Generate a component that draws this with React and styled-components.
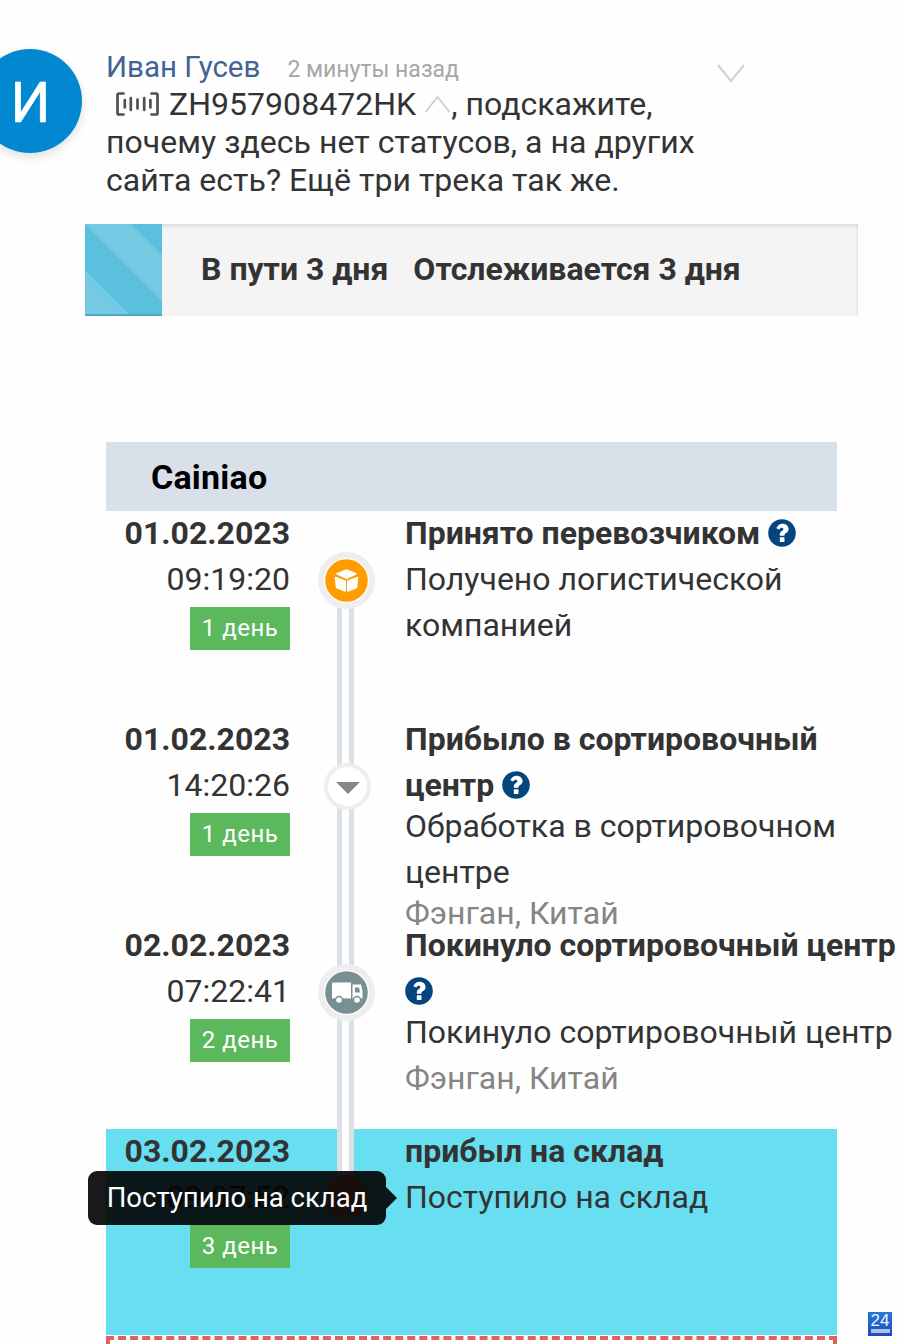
import React from "react";
import styled, { createGlobalStyle } from "styled-components";

const Global = createGlobalStyle`
  * { box-sizing: border-box; }
  body { margin: 0; background: #fefefe; font-family: Roboto, "Liberation Sans", sans-serif; color: #333; }
`;

const Page = styled.main`
  position: relative;
  width: 900px;
  height: 1344px;
  overflow: hidden;
`;

const Comment = styled.article`
  display: flex;
  align-items: flex-start;
  height: 224px;
  padding-top: 48px;
`;

const Avatar = styled.div`
  flex: none;
  display: flex;
  align-items: center;
  justify-content: center;
  width: 104px;
  height: 104px;
  margin: 1px 24px 0 -22px;
  padding: 3px 0 0 1px;
  border-radius: 50%;
  background: #0288d1;
  color: #fff;
  font-size: 56px;
  line-height: 1;
  -webkit-text-stroke: 0.6px #fff;
  box-shadow: 0 4px 10px rgba(0, 0, 0, 0.12);
`;

const CommentBody = styled.div`
  width: 596px;
`;

const Meta = styled.header`
  display: flex;
  align-items: baseline;
  gap: 27px;
  height: 37px;
  line-height: 38px;
  white-space: nowrap;
`;

const Author = styled.span`
  color: #426298;
  font-size: 29.5px;
`;

const Ago = styled.span`
  color: #a6a6a6;
  font-size: 23px;
`;

const Message = styled.p`
  margin: 0;
  font-size: 32px;
  line-height: 38px;
  letter-spacing: 0.035px;
  color: #333;
  white-space: nowrap;
`;

const Line = styled.span`
  display: block;
  height: 38px;
  padding-left: ${(p) => p.$indent || 0}px;
`;

const BarcodeSvg = styled.svg`
  margin-right: 2px;
  vertical-align: -1px;
`;

const CaretSvg = styled.svg`
  margin-left: 0;
`;

const Collapse = styled.div`
  margin: 16px 0 0 15px;
  line-height: 0;
`;

const Progress = styled.section`
  display: flex;
  width: 773px;
  height: 92px;
  margin-left: 85px;
  background: #f4f4f4;
  box-shadow: inset 0 3px 3px rgba(0, 0, 0, 0.07), inset -1px 0 2px rgba(0, 0, 0, 0.06);
`;

const Stripes = styled.div`
  width: 77px;
  height: 92px;
  line-height: 0;
`;

const ProgressText = styled.div`
  display: flex;
  gap: 25px;
  padding-left: 39px;
  font-size: 32px;
  font-weight: 700;
  line-height: 90px;
  white-space: nowrap;
`;

const Tracking = styled.section`
  width: 731px;
  margin: 126px 0 0 106px;
`;

const Carrier = styled.h2`
  height: 69px;
  margin: 0;
  padding-left: 45px;
  background: #dae0e9;
  color: #000;
  font-size: 34px;
  font-weight: 700;
  line-height: 71px;
  letter-spacing: 0.2px;
`;

const Row = styled.div`
  display: grid;
  grid-template-columns: 184px 115px 1fr;
  height: 206px;
  background: ${(p) => (p.$active ? "#68dff0" : "transparent")};
  font-size: 32px;
  line-height: 46px;
  white-space: nowrap;
`;

const When = styled.div`
  display: flex;
  flex-direction: column;
  align-items: flex-end;
  margin-top: -1px;
`;

const DateText = styled.strong`
  display: block;
  height: 46px;
`;

const TimeText = styled.span`
  display: block;
  height: 46px;
`;

const Badge = styled.span`
  width: 100px;
  height: 43px;
  margin-top: 4.6px;
  background: #5cb85c;
  color: #fff;
  font-size: 24px;
  letter-spacing: 0.5px;
  line-height: 43px;
  text-align: center;
`;

const Rail = styled.div`
  display: flex;
  justify-content: center;
  width: 17px;
  height: ${(p) => p.$h}px;
  margin-left: 47px;
  background: linear-gradient(90deg, #dbe0e4 5px, #fefefe 5px 12px, #dbe0e4 12px) 0 ${(p) => p.$from || 0}px no-repeat;
`;

const Node = styled.div`
  flex: none;
  display: flex;
  align-items: center;
  justify-content: center;
  width: ${(p) => p.$size}px;
  height: ${(p) => p.$size}px;
  margin-top: ${(p) => p.$top}px;
  transform: translateX(${(p) => p.$dx || 0}px);
  border: ${(p) => p.$ring}px solid ${(p) => p.$fill || "#eeeeee"};
  border-radius: 50%;
  background: ${(p) => p.$fill || "#fff"};
`;

const Details = styled.div`
  margin-top: -1px;
`;

const Title = styled.strong`
  display: block;
`;

const Text = styled.div`
  margin-top: ${(p) => p.$mt || 0}px;
  color: ${(p) => (p.$muted ? "#858585" : "#333")};
`;

const HelpSvg = styled.svg`
  display: inline-block;
  margin-left: ${(p) => p.$ml}px;
  vertical-align: -3px;
`;

const NextBox = styled.div`
  height: 30px;
  margin-top: 1px;
  border: 4px dashed #e06060;
`;

const Tooltip = styled.div`
  position: absolute;
  left: 88px;
  top: 1171px;
  width: 298px;
  height: 54px;
  border-radius: 9px;
  background: rgba(0, 0, 0, 0.9);
  color: #fff;
  font-size: 27.5px;
  line-height: 54px;
  text-align: center;
  white-space: nowrap;
  &::after {
    content: "";
    position: absolute;
    left: 298px;
    top: 16px;
    border: 11px solid transparent;
    border-left-color: rgba(0, 0, 0, 0.9);
    border-right-width: 0;
  }
`;

const Stamp = styled.div`
  position: absolute;
  left: 868px;
  top: 1312px;
  width: 24px;
  height: 24px;
  background: linear-gradient(#2878d4, #1c4cba);
  color: #eef5ff;
  font: 17px/18px "Liberation Sans", sans-serif;
  text-align: center;
  &::after {
    content: "";
    display: block;
    width: 19px;
    height: 4px;
    margin: -1px auto 0;
    background: #a9c0ea;
  }
`;

const Help = ({ ml = 0 }) => (
  <HelpSvg $ml={ml} width="28" height="28" viewBox="0 0 28 28">
    <circle cx="14" cy="14" r="13.8" fill="#05457d" />
    <path d="M8.300 9.200C9.800 6.200 12 4.800 14.600 4.800c3.300 0 6 2.200 6 5.300 0 3.900-4.100 4.200-4.100 6v.7h-4.700v-1.100c0-3.500 3.600-3.700 3.600-5.400 0-.9-.7-1.500-1.600-1.500-1.100 0-1.800.6-2.500 1.600Z" fill="#fff" />
    <rect x="11.800" y="18.200" width="4.700" height="4.700" rx=".6" fill="#fff" />
  </HelpSvg>
);

const Barcode = () => (
  <BarcodeSvg width="43" height="24" viewBox="0 0 43 24" fill="none" stroke="#505050" strokeWidth="2.700" strokeLinecap="round">
    <path d="M7.500 1.500H3Q1.500 1.500 1.500 3V21Q1.500 22.500 3 22.500H7.500M35.500 1.500H40Q41.500 1.500 41.500 3V21Q41.500 22.500 40 22.500H35.500" />
    <path d="M8.800 8V15.500M14.800 6V18M21.500 7.500V16.500M28.200 6V18M34.400 8V15.500" />
  </BarcodeSvg>
);

const Box = () => (
  <svg width="43" height="43" viewBox="0 0 43 43">
    <circle cx="21.500" cy="21.500" r="21.300" fill="#ff9c00" />
    <path d="M21.500 11 31 14.800 21.500 19.200 12 14.800ZM10.500 18.500 20.300 22.300V32L11.500 28.500ZM32.500 18.500 22.700 22.300V32L31.500 28.500Z" fill="#fff" stroke="#fff" strokeWidth="1.500" strokeLinejoin="round" />
  </svg>
);

const Truck = () => (
  <svg width="43" height="43" viewBox="0 0 43 43">
    <circle cx="21.500" cy="21.500" r="21.300" fill="#7a8f91" />
    <path d="M7 11.500H26V27.500H7ZM27.500 13.500H36L37.500 20V27.500H27.500Z" fill="#fff" />
    <path d="M30 16.500H34L35 21.500H30Z" fill="#7a8f91" />
    <circle cx="14" cy="29" r="4.300" fill="#7a8f91" />
    <circle cx="32" cy="29" r="4.300" fill="#7a8f91" />
    <circle cx="14" cy="29" r="2.800" fill="#fff" />
    <circle cx="32" cy="29" r="2.800" fill="#fff" />
  </svg>
);

export default function App() {
  return (
    <Page>
      <Global />
      <Comment>
        <Avatar>И</Avatar>
        <CommentBody>
          <Meta>
            <Author>Иван Гусев</Author>
            <Ago>2 минуты назад</Ago>
          </Meta>
          <Message>
            <Line $indent={10}>
              <Barcode /> ZH957908472HK{" "}
              <CaretSvg width="27" height="20" viewBox="0 0 27 20" fill="none" stroke="#d0d0d0" strokeWidth="2">
                <path d="M1.500 17 13.500 2 25.500 17" />
              </CaretSvg>
              , подскажите,
            </Line>
            <Line>почему здесь нет статусов, а на других</Line>
            <Line>сайта есть? Ещё три трека так же.</Line>
          </Message>
        </CommentBody>
        <Collapse>
          <svg width="28" height="20" viewBox="0 0 28 20" fill="none" stroke="#d3d3d3" strokeWidth="2.200">
            <path d="M1 1 14 17 27 1" />
          </svg>
        </Collapse>
      </Comment>
      <Progress>
        <Stripes>
          <svg width="77" height="92" viewBox="0 0 77 92">
            <path d="M0 0H77V92H0Z" fill="#5bc0de" />
            <path d="M0 0H46L77 31V77ZM0 46 46 92H0Z" fill="#74c9e3" />
            <path d="M0 90H77V92H0Z" fill="#4fa8c4" />
          </svg>
        </Stripes>
        <ProgressText>
          <span>В пути 3 дня</span>
          <span>Отслеживается 3 дня</span>
        </ProgressText>
      </Progress>
      <Tracking>
        <Carrier>Cainiao</Carrier>
        <Row>
          <When>
            <DateText>01.02.2023</DateText>
            <TimeText>09:19:20</TimeText>
            <Badge>1 день</Badge>
          </When>
          <Rail $h={206} $from={70}>
            <Node $size={57} $ring={6} $top={41} $dx={1}><Box /></Node>
          </Rail>
          <Details>
            <Title>Принято перевозчиком<Help ml={8} /></Title>
            <Text>Получено логистической<br />компанией</Text>
          </Details>
        </Row>
        <Row>
          <When>
            <DateText>01.02.2023</DateText>
            <TimeText>14:20:26</TimeText>
            <Badge>1 день</Badge>
          </When>
          <Rail $h={206}>
            <Node $size={47} $ring={4} $top={46} $dx={2}>
              <svg width="26" height="14" viewBox="0 0 26 14"><path d="M1 2H25L13 14Z" fill="#888883" /></svg>
            </Node>
          </Rail>
          <Details>
            <Title>Прибыло в сортировочный<br />центр<Help ml={8} /></Title>
            <Text $mt={-5}>Обработка в сортировочном<br />центре</Text>
            <Text $mt={-5} $muted>Фэнган, Китай</Text>
          </Details>
        </Row>
        <Row>
          <When>
            <DateText>02.02.2023</DateText>
            <TimeText>07:22:41</TimeText>
            <Badge>2 день</Badge>
          </When>
          <Rail $h={206}>
            <Node $size={57} $ring={6} $top={41} $dx={1}><Truck /></Node>
          </Rail>
          <Details>
            <Title>Покинуло сортировочный центр<br /><Help /></Title>
            <Text $mt={-5}>Покинуло сортировочный центр</Text>
            <Text $muted>Фэнган, Китай</Text>
          </Details>
        </Row>
        <Row $active>
          <When>
            <DateText>03.02.2023</DateText>
            <TimeText>09:07:52</TimeText>
            <Badge>3 день</Badge>
          </When>
          <Rail $h={46}>
            <Node $size={44} $ring={4} $top={46} $fill="#f08a78" />
          </Rail>
          <Details>
            <Title>прибыл на склад</Title>
            <Text>Поступило на склад</Text>
          </Details>
        </Row>
        <NextBox />
      </Tracking>
      <Tooltip>Поступило на склад</Tooltip>
      <Stamp>24</Stamp>
    </Page>
  );
}
